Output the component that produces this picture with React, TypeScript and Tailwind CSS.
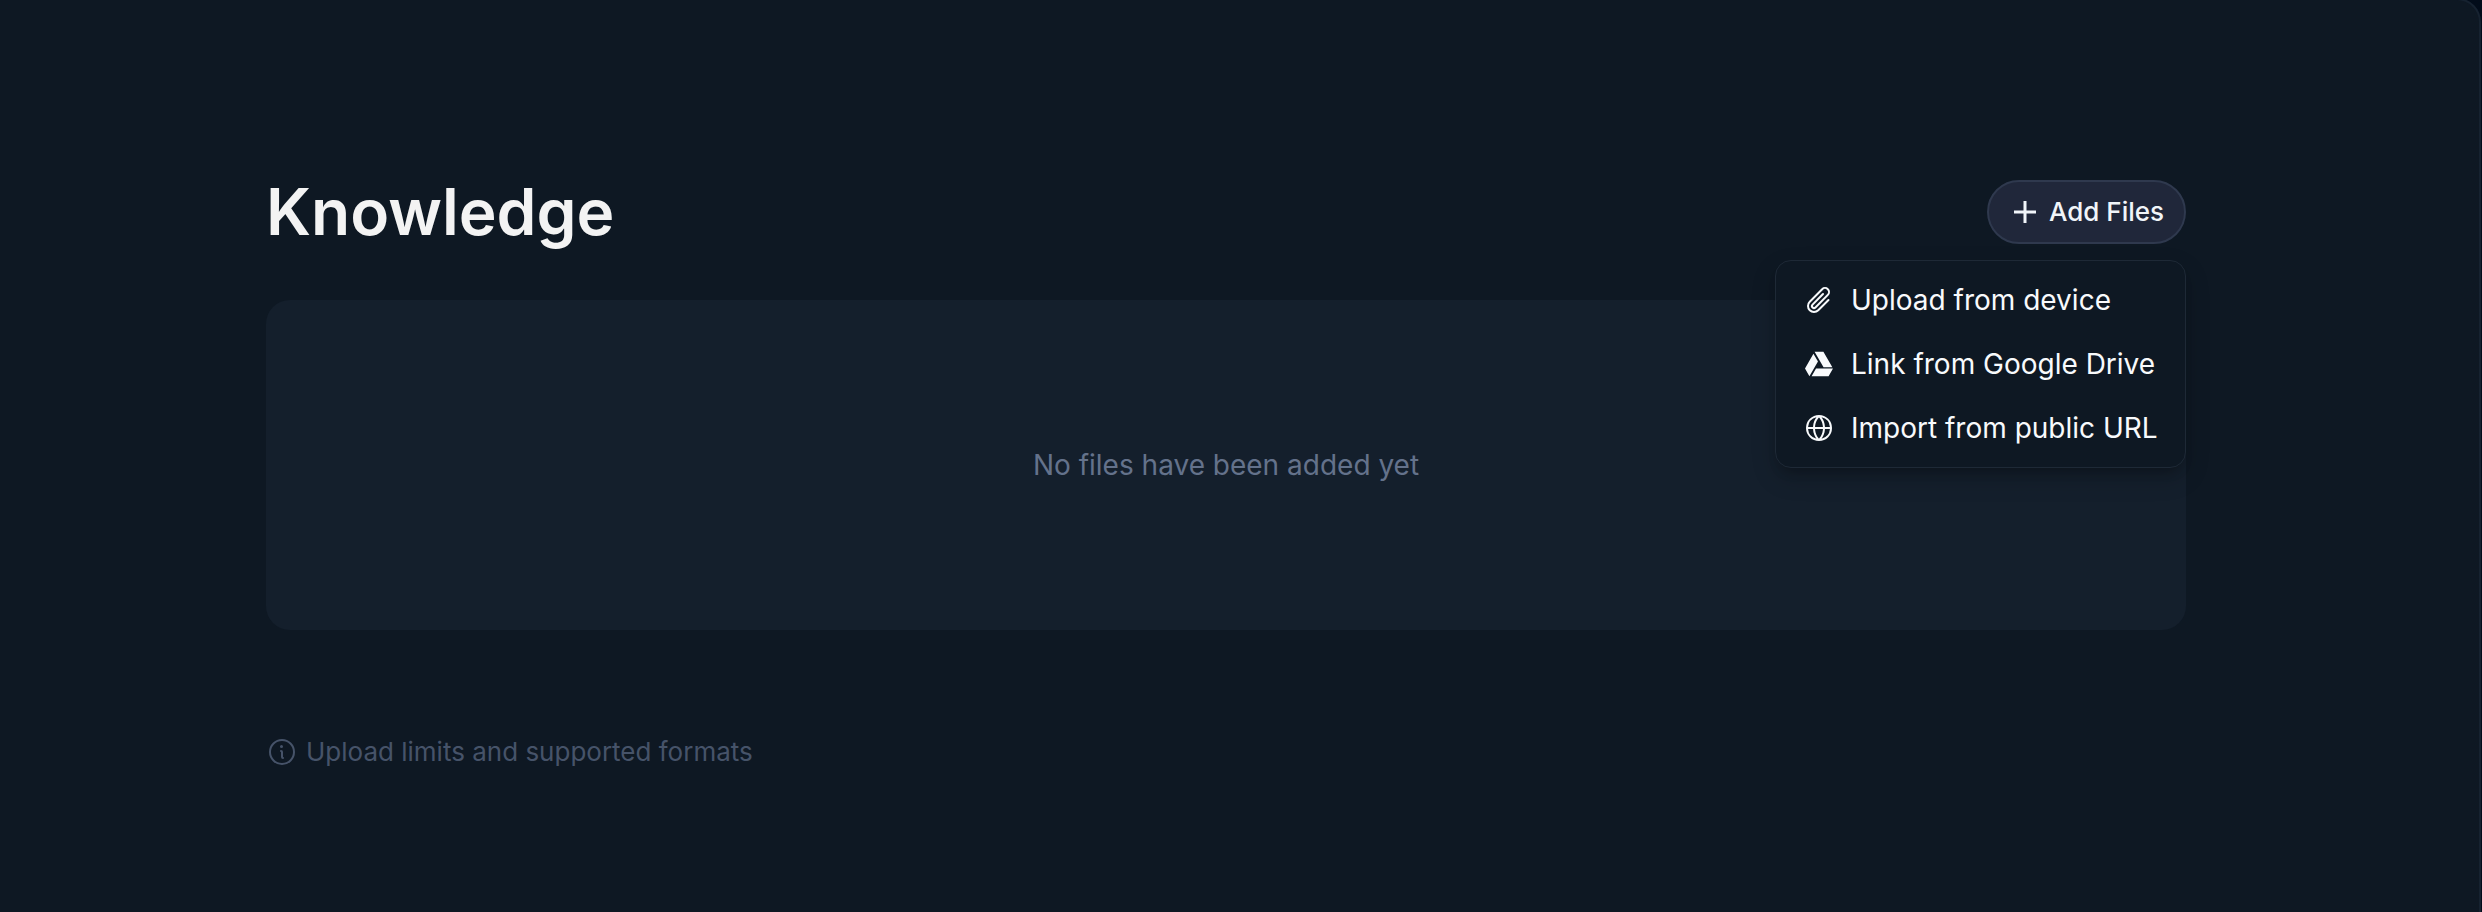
import React from 'react';
import { PiPaperclip, PiGlobeSimple, PiInfo } from 'react-icons/pi';
import { FaGoogleDrive } from 'react-icons/fa';

const menuItems = [
  { label: 'Upload from device', icon: <PiPaperclip size={32} /> },
  { label: 'Link from Google Drive', icon: <FaGoogleDrive size={28} /> },
  { label: 'Import from public URL', icon: <PiGlobeSimple size={32} /> },
];

function AddFiles() {
  return (
    <div className="relative">
      <button className="flex h-16 w-[199px] items-center rounded-full border-2 border-[#2f394e] bg-[#20273a] pl-[25px] text-[26px] font-medium text-[#f1f5f9]">
        <svg width="22" height="22" viewBox="0 0 22 22" stroke="currentColor" strokeWidth="3" fill="none">
          <path d="M11 0v22M0 11h22" />
        </svg>
        <span className="mb-0.5 ml-[13px] whitespace-nowrap">Add Files</span>
      </button>
      <ul className="absolute right-0 top-20 z-10 flex h-[208px] w-[411px] flex-col rounded-2xl border border-[#1e2936] bg-[#0e1823] pl-[27px] pt-[7px] shadow-[0_10px_24px_0_rgba(0,0,0,0.18),0_8px_12px_-6px_rgba(0,0,0,0.25)]">
        {menuItems.map((item) => (
          <li key={item.label} className="flex h-16 items-center gap-4 text-[28px] text-[#f8fafc]">
            <span className="flex w-8 justify-center">{item.icon}</span>
            <span className="whitespace-nowrap">{item.label}</span>
          </li>
        ))}
      </ul>
    </div>
  );
}

export default function App() {
  return (
    <div className="h-[912px] w-full overflow-hidden bg-[#020c1a] font-['Inter',sans-serif]">
      <main className="-mt-[2px] h-[920px] w-[2481px] rounded-tr-[24px] border-r-2 border-t-2 border-[#162230] bg-[#0e1823] pl-[266px] pt-[180px]">
        <div className="w-[1920px]">
          <header className="flex h-16 items-center justify-between">
            <h1 className="text-[64px] font-semibold leading-[64px] text-[#f3f3f3]">Knowledge</h1>
            <AddFiles />
          </header>
          <section className="mt-14 flex h-[330px] items-center justify-center rounded-3xl bg-[#141f2c]">
            <p className="text-[28px] text-[#64728b]">No files have been added yet</p>
          </section>
          <footer className="mt-[102px] flex h-10 items-center text-[26px] text-[#465369]">
            <PiInfo size={32} />
            <span className="mb-0.5 ml-2">Upload limits and supported formats</span>
          </footer>
        </div>
      </main>
    </div>
  );
}
